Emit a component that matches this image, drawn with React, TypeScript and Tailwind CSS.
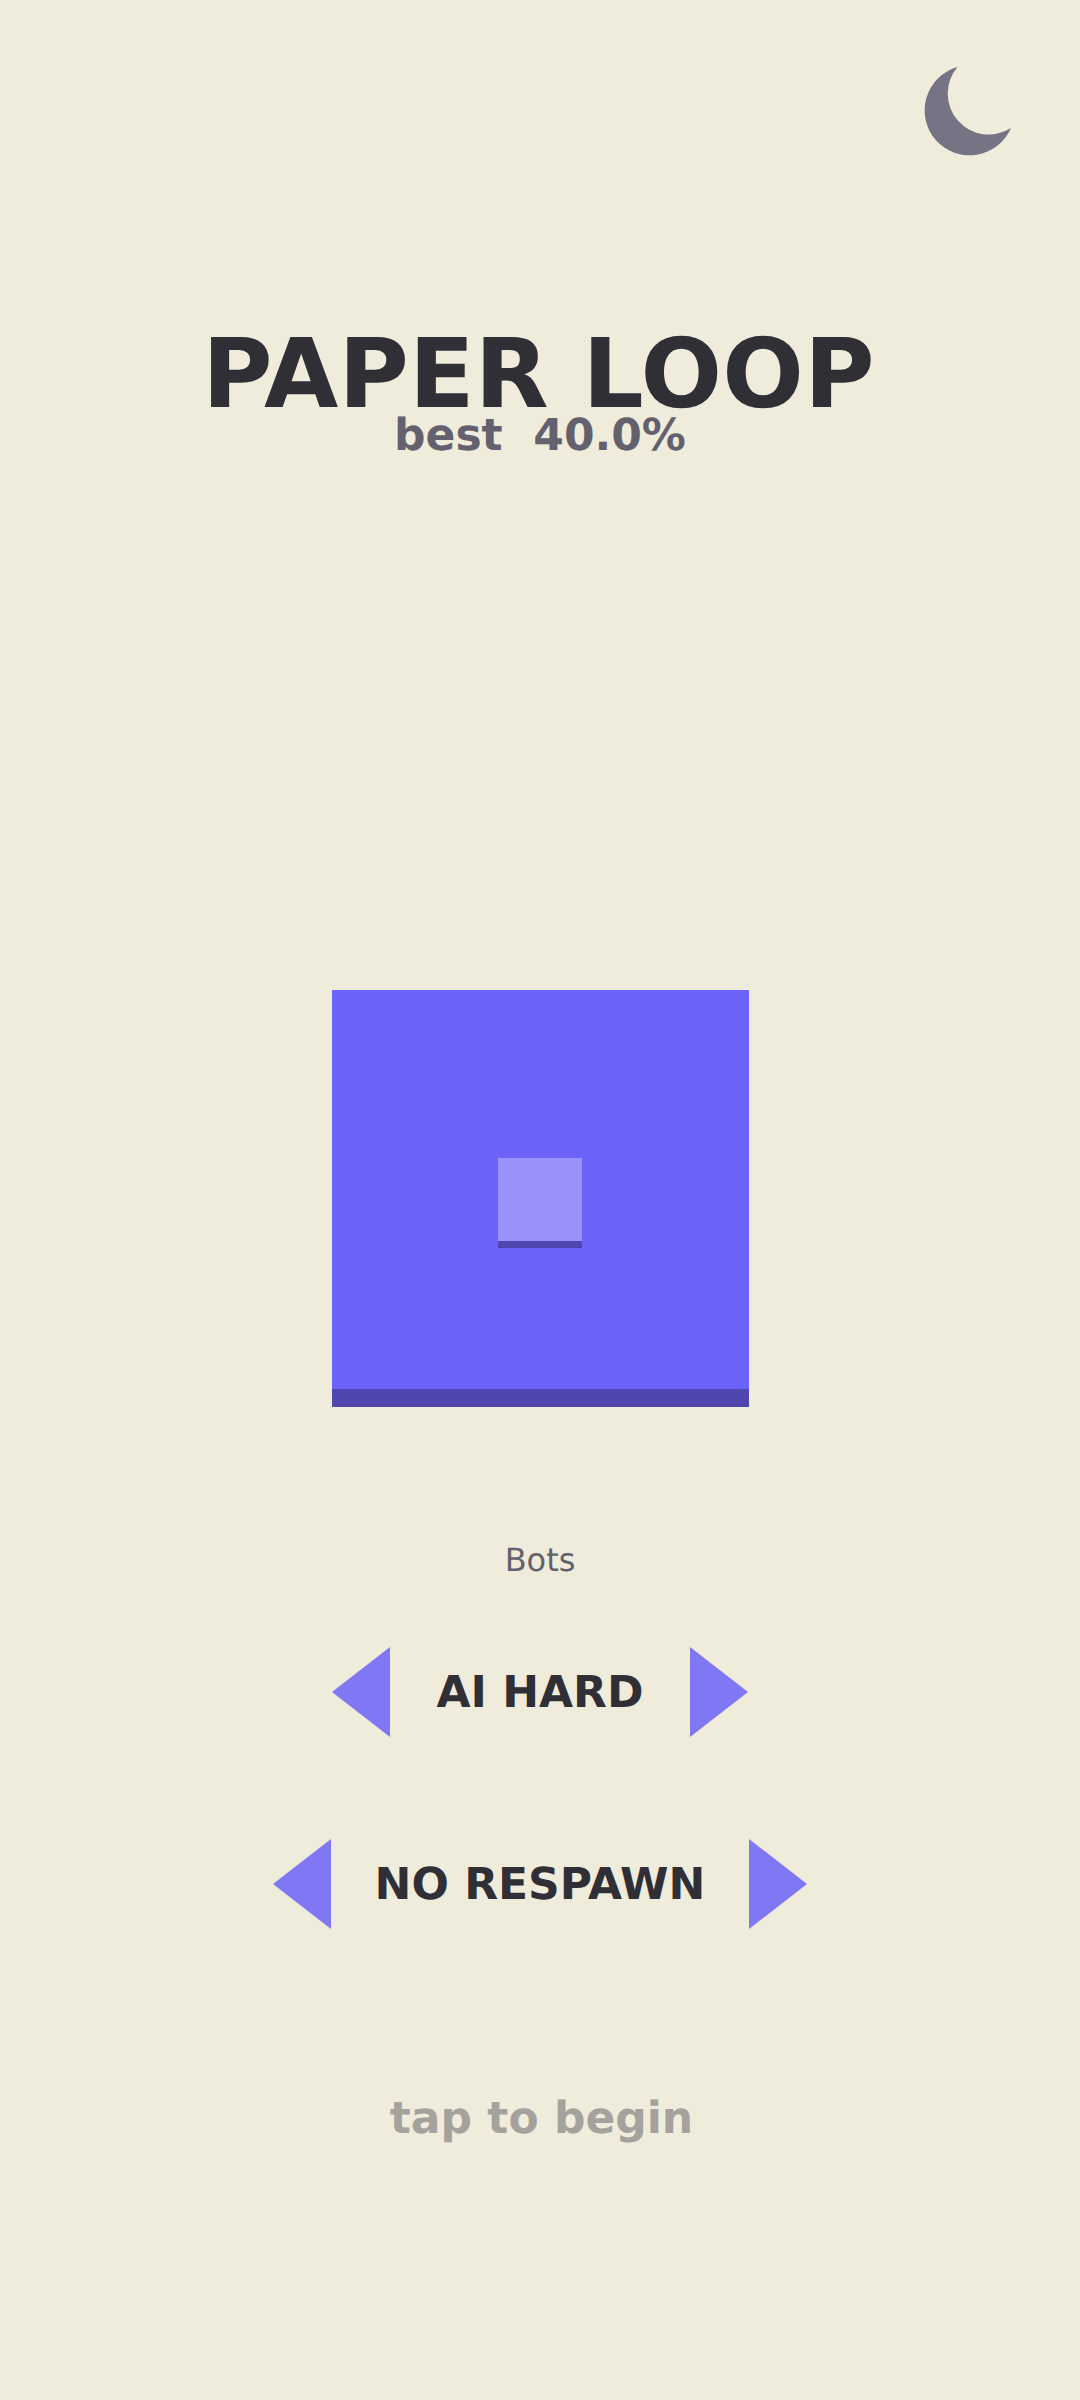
export default function App() {
  const font = "[font-family:'DejaVu_Sans',sans-serif] [text-rendering:geometricPrecision]";
  const Tri = ({ dir }: { dir: "l" | "r" }) => (
    <svg width="58" height="90" viewBox="0 0 58 90" className="shrink-0">
      <polygon points={dir === "l" ? "0,45 58,0 58,90" : "0,0 58,45 0,90"} fill="#7f77f3" />
    </svg>
  );
  const Row = ({ label, w, mt }: { label: string; w: string; mt: string }) => (
    <div className={`flex items-center justify-between ${w} ${mt}`}>
      <Tri dir="l" />
      <span className="pt-[2px] text-[44px] leading-[88px] font-bold text-[#312f36] whitespace-nowrap">{label}</span>
      <Tri dir="r" />
    </div>
  );
  return (
    <div className={`relative w-[1080px] h-[2400px] bg-[#f0ecdc] overflow-hidden flex flex-col items-center ${font}`}>
      <button className="absolute top-[60px] right-[60px] w-[100px] h-[100px]">
        <svg width="100" height="100" viewBox="0 0 100 100">
          <path d="M37.5 7 A45 45 0 1 0 91 68 A41 41 0 0 1 37.5 7 Z" fill="#767384" />
        </svg>
      </button>
      <h1 className="mt-[318px] mr-[3px] text-[96px] tracking-[0.2px] leading-[112px] font-bold text-[#312f36] whitespace-pre">PAPER LOOP</h1>
      <p className="mt-[-20px] text-[44px] leading-[52px] font-bold text-[#64616e] whitespace-pre">best  40.0%</p>
      <div className="relative mt-[528px] w-[417px] h-[417px] bg-[#6c63fb] border-b-[18px] border-[#5046b0] flex items-center justify-center">
        <div className="mt-[27px] w-[84px] h-[90px] bg-[#9a92fb] border-b-[7px] border-[#5046b0]" />
      </div>
      <p className="mt-[134px] text-[32px] leading-[38px] text-[#64616e]">Bots</p>
      <Row label="AI HARD" w="w-[416px]" mt="mt-[68px]" />
      <Row label="NO RESPAWN" w="w-[534px]" mt="mt-[102px]" />
      <p className="mt-[164px] ml-[3px] text-[44px] leading-[52px] font-bold text-[#a5a29e]">tap to begin</p>
    </div>
  );
}
